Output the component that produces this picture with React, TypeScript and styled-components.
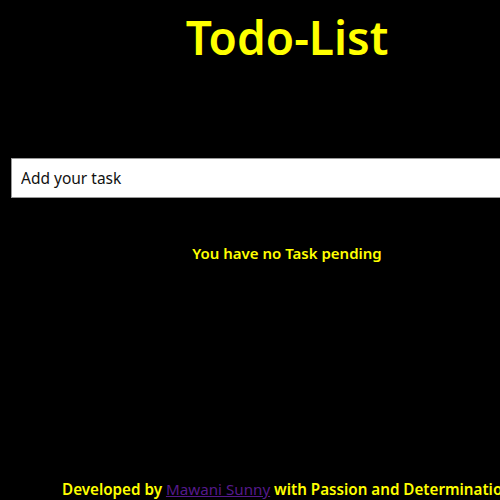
import React from "react";
import styled, { createGlobalStyle } from "styled-components";

const Global = createGlobalStyle`
  html, body { margin: 0; padding: 0; background: #000; }
  body { font-family: "Noto Sans", sans-serif; }
`;

const Page = styled.div`
  width: 574px;
  min-height: 500px;
  display: flex;
  flex-direction: column;
  align-items: center;
  background: #000;
`;

const Title = styled.h1`
  margin: 5px 0 0;
  font-size: 46px;
  font-weight: 600;
  color: #ffff00;
  line-height: 64px;
`;

const Form = styled.div`
  align-self: stretch;
  padding: 89px 0 0 11px;
`;

const TaskInput = styled.input`
  box-sizing: border-box;
  width: 100%;
  height: 40px;
  border: 1px solid #999;
  background: #fff;
  padding: 0 9px;
  font-family: "Noto Sans", sans-serif;
  font-size: 15.5px;
  color: #000;
  outline: none;
  &::placeholder { color: #111; }
`;

const Empty = styled.p`
  margin: 45px 0 0;
  font-size: 15px;
  font-weight: 600;
  color: #ffff00;
`;

const Footer = styled.footer`
  margin-top: auto;
  font-size: 15.2px;
  font-weight: 600;
  color: #ffff00;
  white-space: nowrap;
  line-height: 22px;
  height: 22px;
`;

const Link = styled.a`
  color: #551a8b;
  font-weight: 400;
`;

export default function App() {
  return (
    <>
      <Global />
      <Page>
        <Title>Todo-List</Title>
        <Form>
          <TaskInput placeholder="Add your task" />
        </Form>
        <Empty>You have no Task pending</Empty>
        <Footer>
          Developed by <Link href="#">Mawani Sunny</Link> with Passion and Determination
        </Footer>
      </Page>
    </>
  );
}
